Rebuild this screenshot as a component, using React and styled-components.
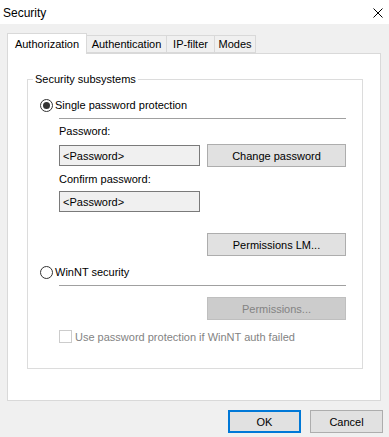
import React from "react";
import styled, { createGlobalStyle } from "styled-components";

const GlobalStyle = createGlobalStyle`
  html, body {
    margin: 0;
    padding: 0;
    background: #f0f0f0;
  }
  * {
    box-sizing: border-box;
  }
`;

const Window = styled.div`
  width: 389px;
  height: 437px;
  background: #f0f0f0;
  font-family: "Liberation Sans", Arial, sans-serif;
  font-size: 11px;
  color: #000;
  overflow: hidden;
  display: flex;
  flex-direction: column;
`;

const TitleBar = styled.div`
  height: 24px;
  background: #fff;
  display: flex;
  align-items: center;
  justify-content: space-between;
  padding: 0 6px 0 3px;
`;

const Title = styled.span`
  font-size: 12px;
  margin-top: 2px;
`;

const CloseIcon = styled.svg`
  width: 10px;
  height: 10px;
  margin-top: 1px;
`;

const Body = styled.div`
  flex: 1;
  display: flex;
  flex-direction: column;
  padding: 9px 8px 0 7px;
`;

const TabStrip = styled.div`
  display: flex;
  align-items: flex-end;
  height: 20px;
  position: relative;
  z-index: 1;
`;

const Tab = styled.div`
  height: ${({ $active }) => ($active ? "21px" : "18px")};
  margin-bottom: ${({ $active }) => ($active ? "-1px" : "0")};
  margin-left: ${({ $first }) => ($first ? "0" : "-1px")};
  width: ${({ $w }) => $w}px;
  background: ${({ $active }) => ($active ? "#fff" : "#f0f0f0")};
  border: 1px solid #d9d9d9;
  border-bottom: ${({ $active }) => ($active ? "none" : "1px solid #d9d9d9")};
  display: flex;
  align-items: center;
  justify-content: center;
  padding-bottom: ${({ $active }) => ($active ? "1px" : "0")};
  white-space: nowrap;
`;

const Pane = styled.div`
  height: 348px;
  background: #fff;
  border: 1px solid #d9d9d9;
  padding: 25px 17px 0 19px;
`;

const Group = styled.div`
  position: relative;
  height: 290px;
  border: 1px solid #dcdcdc;
  padding: 19px 16px 0 12px;
  display: flex;
  flex-direction: column;
`;

const Legend = styled.span`
  position: absolute;
  top: -7px;
  left: 5px;
  padding: 0 2px;
  background: #fff;
  line-height: 13px;
`;

const RadioRow = styled.label`
  display: flex;
  align-items: center;
  gap: 2px;
  height: 13px;
  line-height: 13px;
  margin-top: ${({ $mt }) => $mt || 0}px;
`;

const RadioCircle = styled.span`
  width: 13px;
  height: 13px;
  border-radius: 50%;
  border: 1px solid #333;
  background: #fff;
  display: flex;
  align-items: center;
  justify-content: center;

  &::after {
    content: "";
    width: 7px;
    height: 7px;
    border-radius: 50%;
    background: ${({ $checked }) => ($checked ? "#333" : "transparent")};
  }
`;

const Indent = styled.div`
  margin-left: 19px;
  display: flex;
  flex-direction: column;
`;

const Separator = styled.div`
  height: 1px;
  background: #a0a0a0;
  margin-top: 6px;
`;

const FieldLabel = styled.div`
  height: 13px;
  line-height: 13px;
  margin-top: ${({ $mt }) => $mt}px;
`;

const Row = styled.div`
  display: flex;
  align-items: flex-start;
  justify-content: space-between;
  margin-top: ${({ $mt }) => $mt || 0}px;
`;

const Input = styled.div`
  width: 141px;
  height: 21px;
  margin-top: ${({ $mt }) => $mt || 0}px;
  border: 1px solid #7a7a7a;
  background: #f0f0f0;
  display: flex;
  align-items: center;
  padding-left: 3px;
`;

const Button = styled.div`
  width: ${({ $w }) => $w || 139}px;
  height: 23px;
  border: ${({ $default }) => ($default ? "2px solid #0078d7" : "1px solid #adadad")};
  background: ${({ $disabled }) => ($disabled ? "#cccccc" : "#e1e1e1")};
  color: ${({ $disabled }) => ($disabled ? "#838383" : "#000")};
  border-color: ${({ $disabled, $default }) =>
    $default ? "#0078d7" : $disabled ? "#bfbfbf" : "#adadad"};
  display: flex;
  align-items: center;
  justify-content: center;
  margin-top: ${({ $mt }) => $mt || 0}px;
  align-self: ${({ $right }) => ($right ? "flex-end" : "auto")};
`;

const CheckRow = styled.div`
  display: flex;
  align-items: center;
  gap: 3px;
  height: 13px;
  margin-top: 10px;
  color: #838383;
`;

const CheckBox = styled.span`
  width: 13px;
  height: 13px;
  border: 1px solid #cccccc;
  background: #fff;
`;

const Footer = styled.div`
  display: flex;
  justify-content: flex-end;
  gap: 9px;
  margin-top: 9px;
  margin-right: -2px;
`;

const tabs = [
  { name: "Authorization", w: 80 },
  { name: "Authentication", w: 81 },
  { name: "IP-filter", w: 49 },
  { name: "Modes", w: 42 },
];

export default function App() {
  return (
    <>
      <GlobalStyle />
      <Window>
        <TitleBar>
          <Title>Security</Title>
          <CloseIcon viewBox="0 0 10 10">
            <path d="M0.5 0.5 L9.5 9.5 M9.5 0.5 L0.5 9.5" stroke="#000" strokeWidth="1" fill="none" />
          </CloseIcon>
        </TitleBar>
        <Body>
          <TabStrip>
            {tabs.map((t, i) => (
              <Tab key={t.name} $active={i === 0} $first={i === 0} $w={t.w}>
                {t.name}
              </Tab>
            ))}
          </TabStrip>
          <Pane>
            <Group>
              <Legend>Security subsystems</Legend>
              <RadioRow>
                <RadioCircle $checked />
                Single password protection
              </RadioRow>
              <Indent>
                <Separator />
                <FieldLabel $mt={6}>Password:</FieldLabel>
                <Row $mt={6}>
                  <Input $mt={1}>&lt;Password&gt;</Input>
                  <Button>Change password</Button>
                </Row>
                <FieldLabel $mt={6}>Confirm password:</FieldLabel>
                <Input $mt={5}>&lt;Password&gt;</Input>
                <Button $right $mt={21}>Permissions LM...</Button>
              </Indent>
              <RadioRow $mt={10}>
                <RadioCircle />
                WinNT security
              </RadioRow>
              <Indent>
                <Separator />
                <Button $right $disabled $mt={11}>Permissions...</Button>
                <CheckRow>
                  <CheckBox />
                  Use password protection if WinNT auth failed
                </CheckRow>
              </Indent>
            </Group>
          </Pane>
          <Footer>
            <Button $default $w={73}>OK</Button>
            <Button $w={73}>Cancel</Button>
          </Footer>
        </Body>
      </Window>
    </>
  );
}
